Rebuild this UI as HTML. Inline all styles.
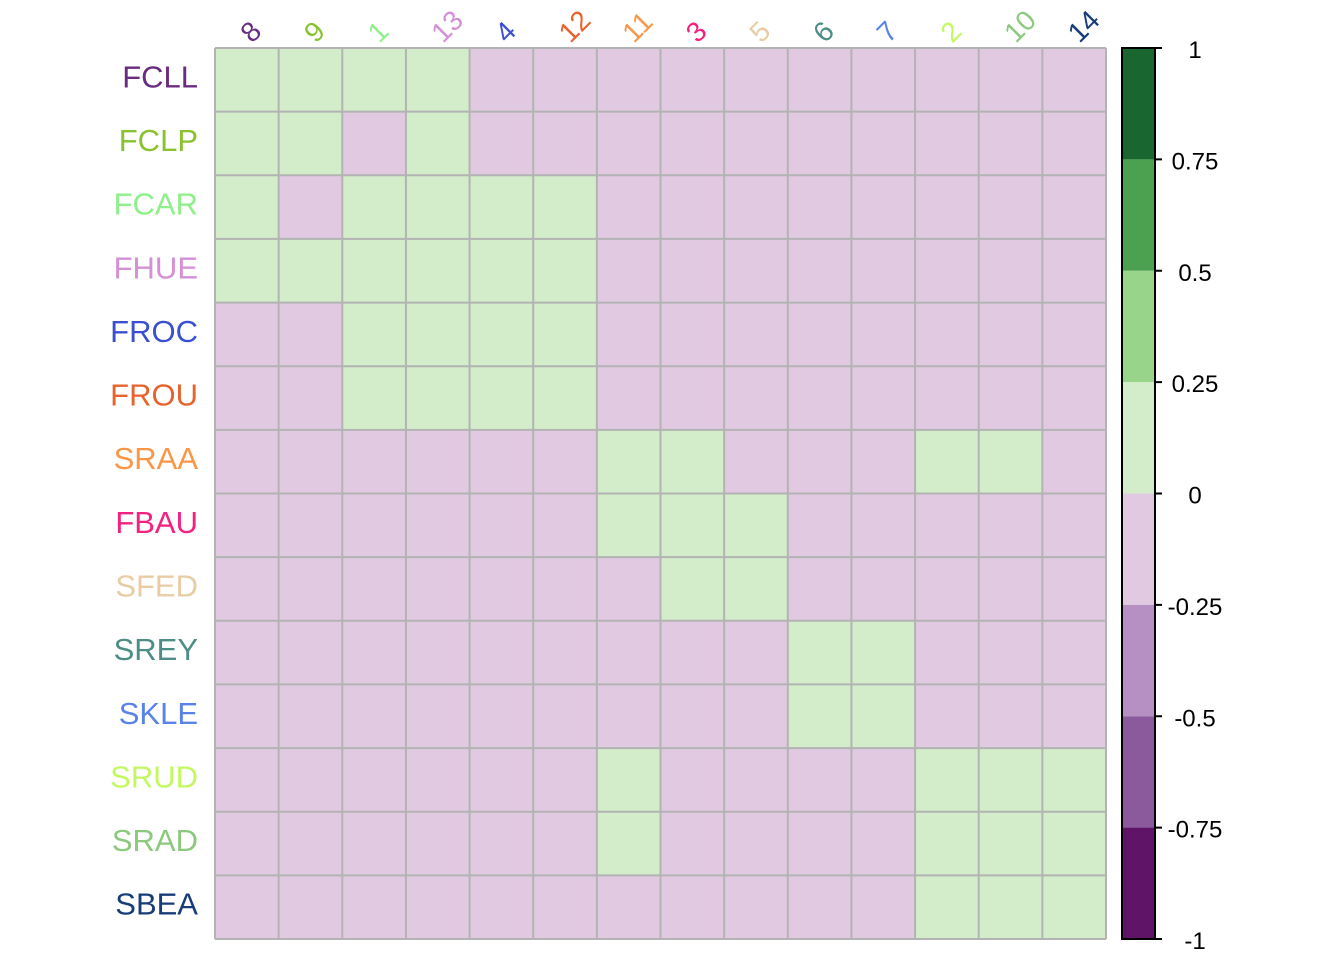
<!DOCTYPE html>
<html><head><meta charset="utf-8"><style>
html,body{margin:0;padding:0;background:#fff;}
svg{display:block;font-family:"Liberation Sans",Arial,sans-serif;}
</style></head><body>
<svg width="1344" height="960" xmlns="http://www.w3.org/2000/svg">
<rect x="215" y="48" width="891" height="891" fill="#e1cae1"/>
<g fill="#d3edca">
<rect x="215" y="48" width="254.57" height="63.64"/>
<rect x="215" y="111.64" width="127.29" height="63.64"/>
<rect x="405.93" y="111.64" width="63.64" height="63.64"/>
<rect x="215" y="175.29" width="63.64" height="63.64"/>
<rect x="342.29" y="175.29" width="254.57" height="63.64"/>
<rect x="215" y="238.93" width="381.86" height="63.64"/>
<rect x="342.29" y="302.57" width="254.57" height="127.29"/>
<rect x="596.86" y="429.86" width="127.29" height="63.64"/>
<rect x="915.07" y="429.86" width="127.29" height="63.64"/>
<rect x="596.86" y="493.5" width="190.93" height="63.64"/>
<rect x="660.5" y="557.14" width="127.29" height="63.64"/>
<rect x="787.79" y="620.79" width="127.29" height="127.29"/>
<rect x="596.86" y="748.07" width="63.64" height="127.29"/>
<rect x="915.07" y="748.07" width="190.93" height="190.93"/>
</g>
<path fill="none" stroke="#b3b3b3" stroke-width="2" d="M215 48V939M278.64 48V939M342.29 48V939M405.93 48V939M469.57 48V939M533.21 48V939M596.86 48V939M660.5 48V939M724.14 48V939M787.79 48V939M851.43 48V939M915.07 48V939M978.71 48V939M1042.36 48V939M1106 48V939M215 48H1106M215 111.64H1106M215 175.29H1106M215 238.93H1106M215 302.57H1106M215 366.21H1106M215 429.86H1106M215 493.5H1106M215 557.14H1106M215 620.79H1106M215 684.43H1106M215 748.07H1106M215 811.71H1106M215 875.36H1106M215 939H1106"/>
<g font-size="31" text-anchor="end">
<text x="198" y="87.3" fill="#6a2c80">FCLL</text>
<text x="198" y="151" fill="#88c22f">FCLP</text>
<text x="198" y="214.6" fill="#8df08a">FCAR</text>
<text x="198" y="278.3" fill="#d58fd6">FHUE</text>
<text x="198" y="341.9" fill="#3b4fd0">FROC</text>
<text x="198" y="405.5" fill="#e8622c">FROU</text>
<text x="198" y="469.2" fill="#fa9646">SRAA</text>
<text x="198" y="532.8" fill="#f52180">FBAU</text>
<text x="198" y="596.5" fill="#e8cca6">SFED</text>
<text x="198" y="660.1" fill="#4d8d86">SREY</text>
<text x="198" y="723.8" fill="#5a83e8">SKLE</text>
<text x="198" y="787.4" fill="#c4f860">SRUD</text>
<text x="198" y="851" fill="#8cc97e">SRAD</text>
<text x="198" y="914.7" fill="#173c78">SBEA</text>
</g>
<g font-size="28">
<text x="252" y="44" fill="#6a2c80" transform="rotate(-45 252 44)">8</text>
<text x="315.6" y="44" fill="#88c22f" transform="rotate(-45 315.6 44)">9</text>
<text x="379.3" y="44" fill="#8df08a" transform="rotate(-45 379.3 44)">1</text>
<text x="442.9" y="44" fill="#d58fd6" transform="rotate(-45 442.9 44)">13</text>
<text x="506.6" y="44" fill="#3b4fd0" transform="rotate(-45 506.6 44)">4</text>
<text x="570.2" y="44" fill="#e8622c" transform="rotate(-45 570.2 44)">12</text>
<text x="633.9" y="44" fill="#fa9646" transform="rotate(-45 633.9 44)">11</text>
<text x="697.5" y="44" fill="#f52180" transform="rotate(-45 697.5 44)">3</text>
<text x="761.1" y="44" fill="#e8cca6" transform="rotate(-45 761.1 44)">5</text>
<text x="824.8" y="44" fill="#4d8d86" transform="rotate(-45 824.8 44)">6</text>
<text x="888.4" y="44" fill="#5a83e8" transform="rotate(-45 888.4 44)">7</text>
<text x="952.1" y="44" fill="#c4f860" transform="rotate(-45 952.1 44)">2</text>
<text x="1015.7" y="44" fill="#8cc97e" transform="rotate(-45 1015.7 44)">10</text>
<text x="1079.4" y="44" fill="#173c78" transform="rotate(-45 1079.4 44)">14</text>
</g>
<rect x="1122" y="48" width="33" height="111.4" fill="#1a6630"/>
<rect x="1122" y="159.4" width="33" height="111.4" fill="#4ba150"/>
<rect x="1122" y="270.8" width="33" height="111.4" fill="#98d58a"/>
<rect x="1122" y="382.1" width="33" height="111.4" fill="#d3edca"/>
<rect x="1122" y="493.5" width="33" height="111.4" fill="#e1cae1"/>
<rect x="1122" y="604.9" width="33" height="111.4" fill="#b690c3"/>
<rect x="1122" y="716.3" width="33" height="111.4" fill="#8a5a9d"/>
<rect x="1122" y="827.6" width="33" height="111.4" fill="#601467"/>
<rect x="1122" y="48" width="33" height="891" fill="none" stroke="#000" stroke-width="2"/>
<path stroke="#000" stroke-width="2" d="M1155 48H1162M1155 159.4H1162M1155 270.8H1162M1155 382.1H1162M1155 493.5H1162M1155 604.9H1162M1155 716.3H1162M1155 827.6H1162M1155 939H1162"/>
<g font-size="24" text-anchor="middle" fill="#000">
<text x="1195" y="58">1</text>
<text x="1195" y="169.4">0.75</text>
<text x="1195" y="280.8">0.5</text>
<text x="1195" y="392.1">0.25</text>
<text x="1195" y="503.5">0</text>
<text x="1195" y="614.9">-0.25</text>
<text x="1195" y="726.3">-0.5</text>
<text x="1195" y="837.6">-0.75</text>
<text x="1195" y="949">-1</text>
</g>
</svg>
</body></html>
